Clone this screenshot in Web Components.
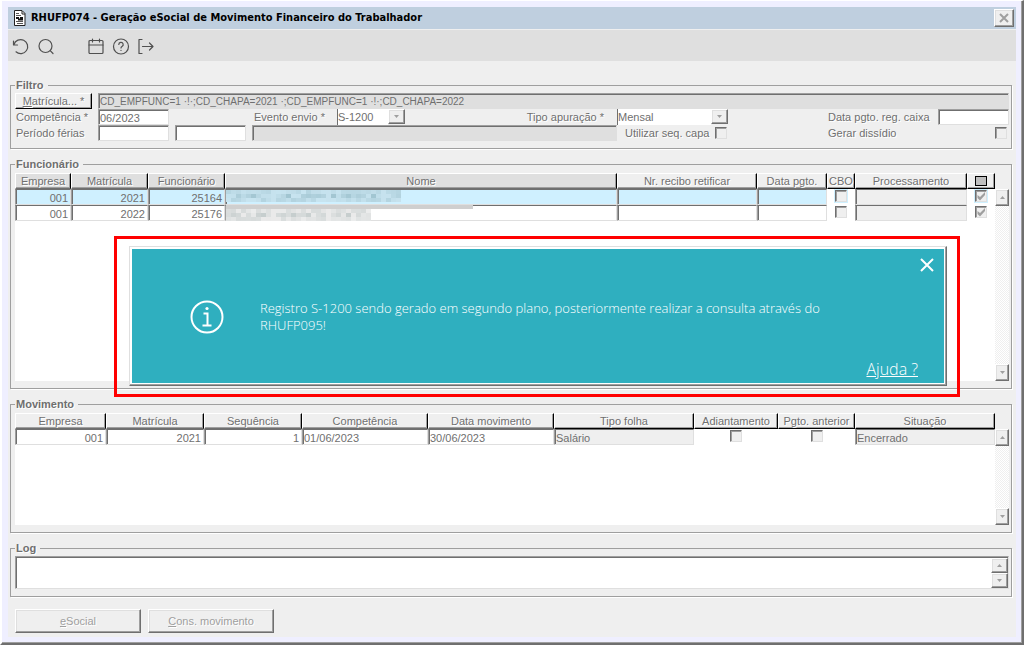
<!DOCTYPE html>
<html lang="pt-BR">
<head>
<meta charset="utf-8">
<title>RHUFP074 - Geração eSocial de Movimento Financeiro do Trabalhador</title>
<style>
    body {
        margin: 0;
        padding-right: 1px;
        background: #fff;
        color: #6f6f6f;
        font: 11px/14px "Liberation Sans", Arial, sans-serif;
        --face: #efefef;
        --readonly: #dfdfdf;
        --light: #dfdfdf;
        --mid: #9f9f9f;
        --dark: #6f6f6f;
        --selected: #cff0ff;
    }
</style>
</head>
<body>

<rh-window caption="RHUFP074 - Geração eSocial de Movimento Financeiro do Trabalhador">
    <rh-toolbar slot="toolbar"></rh-toolbar>
    <rh-group legend="Filtro"><rh-filter></rh-filter></rh-group>
    <rh-group legend="Funcionário"><rh-grid id="employees" lines="12"></rh-grid></rh-group>
    <rh-group legend="Movimento"><rh-grid id="movements" lines="6"></rh-grid></rh-group>
    <rh-group legend="Log"><rh-log></rh-log></rh-group>
    <rh-button slot="actions"><u>e</u>Social</rh-button>
    <rh-button slot="actions"><u>C</u>ons. movimento</rh-button>
    <rh-notice slot="overlay">Registro S-1200 sendo gerado em segundo plano, posteriormente realizar a consulta através do RHUFP095!</rh-notice>
</rh-window>

<script>
const checkStyle = `
    input[type=checkbox] {
        appearance: none;
        box-sizing: border-box;
        display: block;
        width: 12px;
        height: 12px;
        margin: 0;
        background: var(--face);
        border: 1px solid var(--light);
        border-top-color: var(--dark);
        border-left-color: var(--dark);
        box-shadow: inset 1px 1px 0 var(--mid);
    }
    input[type=checkbox]:checked::before {
        content: "";
        display: block;
        height: 10px;
        background: var(--mid);
        clip-path: polygon(15% 40%, 40% 60%, 90% 10%, 90% 40%, 40% 95%, 15% 70%);
    }
`

const raisedStyle = `
    background: var(--face);
    border: 1px solid var(--dark);
    border-top-color: #fff;
    border-left-color: #fff;
    box-shadow: inset -1px -1px 0 var(--mid), inset 1px 1px 0 var(--light);
`

class RhWindow extends HTMLElement {

    constructor(){
        super()
        const root = this.attachShadow({mode: 'open'})
        root.innerHTML = `
        <style>
            :host {
                display: flex;
                flex-direction: column;
                position: relative;
                box-sizing: border-box;
                min-height: 100vh;
                padding: 6px;
                background: #efefff;
                border: 2px solid var(--dark);
                border-top: 1px solid #fff;
                border-left-color: #fff;
                box-shadow: inset -1px -1px 0 var(--mid);
            }
            header {
                display: flex;
                align-items: center;
                gap: 4px;
                height: 22px;
                padding: 0 2px 0 5px;
                background: #bfcfdf;
                border-bottom: 1px solid var(--face);
            }
            h1 {
                flex: 1;
                margin: 0;
                color: #000;
                font: bold 11px/16px "DejaVu Sans Condensed", "Noto Sans", sans-serif;
            }
            header button {
                display: grid;
                place-items: center;
                width: 20px;
                height: 18px;
                padding: 0;
                ${raisedStyle}
            }
            main {
                flex: 1;
                display: flex;
                flex-direction: column;
                gap: 8px;
                padding: 17px 4px 4px 2px;
                background: var(--face);
            }
            footer {
                display: flex;
                gap: 7px;
                padding: 4px 5px 0;
            }
        </style>
        <header>
            <svg width="14" height="16" viewBox="0 0 14 16" aria-hidden="true">
                <path d="M1.500 .5H9l3 3v12H1.500z" fill="#fff" stroke="#222"/>
                <path d="M9 1v3h3" fill="none" stroke="#222"/>
                <path d="M3 3.500h3M3 5.500h5M3 11.500h7M4 13.500h6" stroke="#555"/>
                <path d="M3 8h3m1 0h3M5 9.500h5" stroke="#111" stroke-width="2"/>
            </svg>
            <h1>${this.getAttribute('caption')}</h1>
            <button type="button" aria-label="Fechar">
                <svg width="10" height="10" viewBox="0 0 10 10"><path d="M1 1l8 8M9 1l-8 8" stroke="#9f9f9f" stroke-width="2"/></svg>
            </button>
        </header>
        <slot name="toolbar"></slot>
        <main>
            <slot></slot>
            <footer><slot name="actions"></slot></footer>
        </main>
        <slot name="overlay"></slot>`
    }
}

class RhToolbar extends HTMLElement {

    constructor(){
        super()
        const root = this.attachShadow({mode: 'open'})
        root.innerHTML = `
        <style>
            :host {
                display: flex;
                align-items: center;
                box-sizing: border-box;
                height: 31px;
                padding: 3px 0 0 4px;
                gap: 7px;
                background: #dfdfdf;
            }
            button {
                display: block;
                padding: 0;
                border: 0;
                background: none;
            }
            .gap { margin-left: 25px; }
            svg {
                display: block;
                fill: none;
                stroke: #505050;
                stroke-width: 1.2;
                stroke-linecap: round;
                stroke-linejoin: round;
            }
        </style>
        ${this.icon('Atualizar', '<path d="M1.500 3v4h4M2 6.500A7 7 0 1 1 4 13.800"/>')}
        ${this.icon('Pesquisar', '<circle cx="8.500" cy="8" r="6.500"/><path d="M13.200 12.700l2.800 2.800"/>')}
        ${this.icon('Calendário', '<rect x="2" y="2.500" width="14" height="13" rx="1"/><path d="M2 7h14M5.500 1v3M12.500 1v3"/>', 'gap')}
        ${this.icon('Ajuda', '<circle cx="9" cy="8.500" r="7.500"/><path d="M6.800 6.500a2.200 2.200 0 1 1 3.200 2q-1 .5-1 1.500M9 12.300v.2"/>')}
        ${this.icon('Sair', '<path d="M5 1.500H2v14h3M5.500 8.500H16M12.500 5l3.500 3.500-3.500 3.500"/>')}`
    }

    icon(label, shapes, cls = ''){
        return `<button type="button" class="${cls}" aria-label="${label}"><svg width="18" height="18" viewBox="0 0 18 18">${shapes}</svg></button>`
    }
}

class RhGroup extends HTMLElement {

    constructor(){
        super()
        const root = this.attachShadow({mode: 'open'})
        root.innerHTML = `
        <style>
            :host { display: block; }
            fieldset {
                min-width: 0;
                margin: 0;
                padding: 1px 2px 7px 4px;
                border: 1px solid var(--mid);
                box-shadow: 1px 1px 0 #fff;
            }
            legend {
                height: 14px;
                padding: 0 4px 0 1px;
                font-weight: bold;
                text-shadow: 1px 1px 0 #fff;
            }
        </style>
        <fieldset>
            <legend>${this.getAttribute('legend')}</legend>
            <slot></slot>
        </fieldset>`
    }
}

class RhButton extends HTMLElement {

    constructor(){
        super()
        const root = this.attachShadow({mode: 'open'})
        root.innerHTML = `
        <style>
            :host { display: block; }
            button {
                display: block;
                width: 126px;
                height: 24px;
                padding: 0;
                color: #9f9f9f;
                font: inherit;
                text-shadow: 1px 1px 0 #fff;
                ${raisedStyle}
            }
        </style>
        <button type="button" disabled><slot></slot></button>`
    }
}

class RhFilter extends HTMLElement {

    constructor(){
        super()
        const root = this.attachShadow({mode: 'open'})
        root.innerHTML = `
        <style>
            :host { display: block; }
            ${checkStyle}
            .row {
                display: flex;
                align-items: center;
                height: 16px;
            }
            label { text-shadow: 1px 1px 0 #fff; }
            .first { width: 83px; padding-left: 1px; box-sizing: border-box; }
            .side {
                display: flex;
                align-items: center;
                width: 392px;
            }
            input:not([type]), select {
                box-sizing: border-box;
                min-width: 0;
                height: 16px;
                margin: 0;
                padding: 1px 1px 0;
                background: #fff;
                color: inherit;
                font: inherit;
                border: 1px solid var(--light);
                border-top-color: var(--mid);
                border-left-color: var(--mid);
                border-radius: 0;
                box-shadow: inset 1px 1px 0 var(--dark);
            }
            input[readonly] {
                flex: 1;
                background: var(--readonly) !important;
                font-size: 10px !important;
            }
            select {
                appearance: none;
                border-width: 0 0 0 1px;
                border-left-color: var(--dark);
                box-shadow: none;
                padding: 0;
            }
            .date { width: 71px; }
            .combo { display: flex; }
            .pick {
                box-sizing: border-box;
                display: grid;
                place-items: center;
                width: 17px;
                height: 15px;
                ${raisedStyle}
            }
            button {
                width: 77px;
                height: 16px;
                margin-right: 6px;
                padding: 0;
                color: inherit;
                font: inherit;
                line-height: 12px;
                background: var(--face);
                border: 1px solid #000;
                border-top-color: #fff;
                border-left-color: #fff;
                box-shadow: inset -1px -1px 0 var(--mid);
                text-shadow: 1px 1px 0 #fff;
            }
            .dates { flex: 1; gap: 6px; }
            .event { margin-left: 85px; width: 83px; }
            .kind { margin-left: auto; padding-right: 13px; }
            .paid { margin-left: auto; width: 110px; }
            .cover { width: 98px; padding-left: 8px; box-sizing: border-box; }
            .raise { margin-left: auto; width: 167px; }
            #raise { margin-right: 2px; }
        </style>
        <div class="row">
            <button type="button"><u>M</u>atrícula... *</button>
            <input readonly aria-label="Matrícula" value="CD_EMPFUNC=1 ·!·;CD_CHAPA=2021 ·;CD_EMPFUNC=1 ·!·;CD_CHAPA=2022">
        </div>
        <div class="row">
            <label class="first" for="comp">Competência *</label>
            <input class="date" id="comp" value="06/2023">
            <label class="event" for="event">Evento envio *</label>
            ${this.combo('event', 'S-1200', 51)}
            <label class="kind" for="kind">Tipo apuração *</label>
            <div class="side">
                ${this.combo('kind', 'Mensal', 94)}
                <label class="paid" for="paid">Data pgto. reg. caixa</label>
                <input class="date" id="paid">
            </div>
        </div>
        <div class="row">
            <label class="first" for="from">Período férias</label>
            <div class="row dates">
                <input class="date" id="from">
                <input class="date" aria-label="Período férias até">
                <input readonly aria-label="Férias">
            </div>
            <div class="side">
                <label class="cover" for="cover">Utilizar seq. capa</label>
                <input type="checkbox" id="cover">
                <label class="raise" for="raise">Gerar dissídio</label>
                <input type="checkbox" id="raise">
            </div>
        </div>`
    }

    combo(id, value, width){
        return `<span class="combo">
            <select id="${id}" style="width:${width}px"><option>${value}</option></select>
            <span class="pick" aria-hidden="true"><svg width="5" height="3"><path d="M0 0h5L2.500 3z" fill="#9f9f9f"/></svg></span>
        </span>`
    }
}

class RhScroll extends HTMLElement {

    constructor(){
        super()
        const root = this.attachShadow({mode: 'open'})
        root.innerHTML = `
        <style>
            :host {
                display: flex;
                flex-direction: column;
                justify-content: space-between;
                width: 14px;
                background: repeating-conic-gradient(#fff 0 25%, #efefef 0 50%) 0 0 / 2px 2px;
            }
            button {
                display: grid;
                place-items: center;
                width: 100%;
                height: var(--step, 17px);
                padding: 0;
                ${raisedStyle}
            }
        </style>
        <button type="button" aria-label="Subir"><svg width="5" height="3"><path d="M0 3h5L2.500 0z" fill="#9f9f9f"/></svg></button>
        <button type="button" aria-label="Descer"><svg width="5" height="3"><path d="M0 0h5L2.500 3z" fill="#9f9f9f"/></svg></button>`
    }
}

// pixelated strip that hides a person's name
class RhMask extends HTMLElement {

    constructor(){
        super()
        const [r, g, b] = this.getAttribute('tint').split(' ').map(Number)
        const cols = Number(this.getAttribute('cols'))
        let dom = ''
        let seed = cols * 7 + 3
        for(let y = 0;y<3;y++){
            for(let x = 0;x<cols;x++){
                seed = (seed * 73 + 41) % 1009
                const k = x % 11 === 9 ? 2 : (seed % 40) * (y === 1 ? 1 : .55)
                dom += `<rect x="${x*5}" y="${y*4}" width="5" height="4" fill="rgb(${r-k},${g-k*.8},${b-k*.8})"/>`
            }
        }
        const root = this.attachShadow({mode: 'open'})
        root.innerHTML = `
        <style>
            :host { display: block; }
            svg { display: block; }
            :host([bar]) {
                width: 247px;
                margin-top: -2px;
                border-top: 4px solid #cfcfcf;
            }
        </style>
        <svg width="${cols*5}" height="12" shape-rendering="crispEdges" aria-hidden="true">${dom}</svg>`
    }
}

const grids = {
    employees: {
        columns: [
            ['Empresa', 56, 'num shade'], ['Matrícula', 77, 'num shade'], ['Funcionário', 77, 'num shade'],
            ['Nome', 0, 'mask shade'], ['Nr. recibo retificar', 140, ''], ['Data pgto.', 70, ''],
            ['CBO', 28, 'check'], ['Processamento', 112, 'locked'], ['<i></i>', 28, 'check']
        ],
        rows: [
            ['001', '2021', '25164', '<rh-mask cols="35" tint="200 228 240"></rh-mask>', '', '', false, '', true],
            ['001', '2022', '25176', '<rh-mask cols="29" tint="236 236 236" bar></rh-mask>', '', '', false, '', true]
        ],
        current: 0
    },
    movements: {
        columns: [
            ['Empresa', 91, 'num'], ['Matrícula', 98, 'num'], ['Sequência', 98, 'num'],
            ['Competência', 126, ''], ['Data movimento', 126, ''], ['Tipo folha', 140, 'locked'],
            ['Adiantamento', 84, 'check'], ['Pgto. anterior', 77, 'check'], ['Situação', 0, 'locked']
        ],
        rows: [
            ['001', '2021', '1', '01/06/2023', '30/06/2023', 'Salário', false, false, 'Encerrado']
        ],
        current: -1
    }
}

class RhGrid extends HTMLElement {

    constructor(){
        super()
        const data = grids[this.id]
        const root = this.attachShadow({mode: 'open'})
        root.innerHTML = `
        <style>
            :host {
                display: flex;
                padding-top: 1px;
                --line: 16px;
            }
            ${checkStyle}
            .list {
                flex: 1;
                min-width: 0;
                min-height: calc(var(--line) * ${Number(this.getAttribute('lines')) + 1});
                background: linear-gradient(var(--face) 16px, #fff 16px);
            }
            table {
                width: 100%;
                table-layout: fixed;
                border-spacing: 0;
            }
            th, td {
                box-sizing: border-box;
                height: var(--line);
                padding: 0;
                line-height: 14px;
                white-space: nowrap;
            }
            th {
                font-weight: normal;
                background: var(--face);
                border: 1px solid #000;
                border-top-color: #fff;
                border-left-color: #fff;
                border-bottom-color: var(--dark);
                box-shadow: inset -1px -1px 0 var(--mid);
                text-shadow: 1px 1px 0 #fff;
            }
            th.shade { background: var(--readonly); }
            th.check, th.locked { border-bottom-color: #000; }
            th i {
                display: block;
                width: 10px;
                height: 8px;
                margin: 0 auto;
                background: #bfbfbf;
                border: 1px solid #000;
            }
            td {
                background: #fff;
                border: 1px solid var(--light);
                border-top-color: var(--dark);
                border-left-color: var(--mid);
                box-shadow: inset 1px 0 0 var(--dark);
                padding: 0 1px;
            }
            td.num { text-align: right; padding-right: 2px; }
            td.mask { padding: 0; }
            td.locked { background: var(--face); }
            td.check { border: 0; box-shadow: none; padding: 0; }
            td.check input { margin: 0 auto; }
            td > div { height: 14px; line-height: 16px; }
            .current td:not(.check, .locked) { background: var(--selected); }
            .current input { outline: 1px solid var(--selected); }
            rh-scroll { margin-top: var(--line); }
        </style>
        <div class="list">
            <table>
                <colgroup>${data.columns.map(c => `<col${c[1] ? ` style="width:${c[1]}px"` : ''}>`).join('')}</colgroup>
                <thead><tr>${data.columns.map(c => `<th class="${c[2]}">${c[0]}</th>`).join('')}</tr></thead>
                <tbody>${data.rows.map((r, i) => this.buildRow(data, r, i)).join('')}</tbody>
            </table>
        </div>
        <rh-scroll></rh-scroll>`
    }

    buildRow(data, row, index){
        const cells = row.map((value, i) => {
            const [title, , cls] = data.columns[i]
            const label = title.startsWith('<') ? 'Selecionar' : title
            const content = typeof value === 'boolean'
                ? `<input type="checkbox" aria-label="${label}" ${value ? 'checked' : ''}>`
                : value
            return `<td class="${cls}"><div>${content}</div></td>`
        })
        return `<tr class="${index === data.current ? 'current' : ''}">${cells.join('')}</tr>`
    }
}

class RhLog extends HTMLElement {

    constructor(){
        super()
        const root = this.attachShadow({mode: 'open'})
        root.innerHTML = `
        <style>
            :host {
                display: flex;
                background: #fff;
                border: 1px solid var(--light);
                border-top-color: var(--mid);
                border-left-color: var(--mid);
                box-shadow: inset 1px 1px 0 var(--dark);
                padding: 1px 0 0 1px;
            }
            textarea {
                flex: 1;
                height: 30px;
                padding: 0 2px;
                box-sizing: border-box;
                border: 0;
                resize: none;
                overflow: hidden;
                font: inherit;
                background: none;
            }
            rh-scroll { width: 17px; --step: 15px; }
        </style>
        <textarea aria-label="Log"></textarea>
        <rh-scroll></rh-scroll>`
    }
}

class RhNotice extends HTMLElement {

    constructor(){
        super()
        const root = this.attachShadow({mode: 'open'})
        root.innerHTML = `
        <style>
            :host {
                position: absolute;
                top: 235px;
                left: 112px;
                right: 62px;
                border: 3px solid #f00;
                padding: 7px 10px 8px 12px;
            }
            .box {
                display: flex;
                flex-direction: column;
                justify-content: space-between;
                box-sizing: border-box;
                min-height: 140px;
                padding: 10px 11px 8px 59px;
                background: #2fafbf;
                color: #fff;
                border: 1px solid var(--dark);
                border-top-color: var(--light);
                border-left-color: var(--light);
                box-shadow: inset -1px -1px 0 var(--mid), inset 2px 2px 0 #fff, inset -2px -2px 0 #fff;
                font-family: "Open Sans", "Noto Sans", sans-serif;
            }
            svg { display: block; fill: none; stroke: #fff; stroke-width: 2; flex: none; }
            button {
                align-self: flex-end;
                padding: 0;
                border: 0;
                background: none;
            }
            .message {
                display: flex;
                align-items: center;
                gap: 35px;
            }
            p {
                max-width: 590px;
                margin: 0;
                font-size: 13px;
                line-height: 17px;
                font-weight: 300;
            }
            a {
                align-self: flex-end;
                margin-right: 17px;
                color: inherit;
                font-size: 16px;
                line-height: 16px;
                font-weight: 300;
            }
        </style>
        <div class="box" role="alert">
            <button type="button" aria-label="Fechar">
                <svg width="16" height="16" viewBox="0 0 16 16"><path d="M2 2l12 12M14 2L2 14"/></svg>
            </button>
            <div class="message">
                <svg width="36" height="36" viewBox="0 0 36 36">
                    <circle cx="18" cy="18" r="15.500"/>
                    <path d="M14.500 14.500H18.500V26.500M13.500 26.500h9"/>
                    <circle cx="18" cy="9.500" r="1.600" fill="#fff" stroke="none"/>
                </svg>
                <p><slot></slot></p>
            </div>
            <a href="#">Ajuda ?</a>
        </div>`
    }
}

customElements.define('rh-window', RhWindow)
customElements.define('rh-toolbar', RhToolbar)
customElements.define('rh-group', RhGroup)
customElements.define('rh-button', RhButton)
customElements.define('rh-filter', RhFilter)
customElements.define('rh-scroll', RhScroll)
customElements.define('rh-mask', RhMask)
customElements.define('rh-grid', RhGrid)
customElements.define('rh-log', RhLog)
customElements.define('rh-notice', RhNotice)
</script>
</body>
</html>
